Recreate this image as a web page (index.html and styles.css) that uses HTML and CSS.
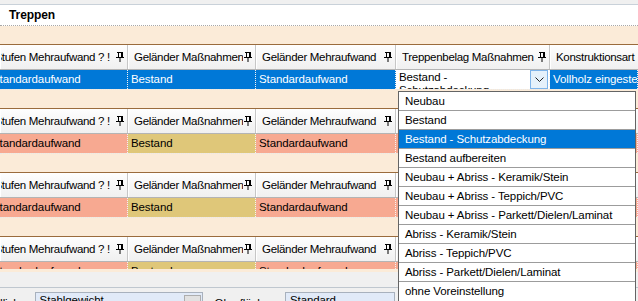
FILE: index.html
```html
<!DOCTYPE html>
<html lang="de">
<head>
    <meta charset="UTF-8">
    <title>Treppen</title>
    <link rel="stylesheet" href="styles.css">
</head>
<body>
    <div class="window">
        <div class="top-strip"></div>
        <div class="title">Treppen</div>

        <div class="band">
            <div class="group">
                <div class="grid-head">
                    <div class="hcell first"><span>Stufen Mehraufwand ? !</span><svg class="pin" viewBox="0 0 8 10"><path d="M1 0.5h6M2.5 0.5v5M5.5 0.5v5M6.5 0.5v5M0 5.5h8M4 5.5v4.5" stroke="#000" fill="none"/></svg></div>
                    <div class="hcell"><span>Geländer Maßnahmen</span><svg class="pin" viewBox="0 0 8 10"><path d="M1 0.5h6M2.5 0.5v5M5.5 0.5v5M6.5 0.5v5M0 5.5h8M4 5.5v4.5" stroke="#000" fill="none"/></svg></div>
                    <div class="hcell"><span>Geländer Mehraufwand</span><svg class="pin" viewBox="0 0 8 10"><path d="M1 0.5h6M2.5 0.5v5M5.5 0.5v5M6.5 0.5v5M0 5.5h8M4 5.5v4.5" stroke="#000" fill="none"/></svg></div>
                    <div class="hcell"><span>Treppenbelag Maßnahmen</span><svg class="pin" viewBox="0 0 8 10"><path d="M1 0.5h6M2.5 0.5v5M5.5 0.5v5M6.5 0.5v5M0 5.5h8M4 5.5v4.5" stroke="#000" fill="none"/></svg></div>
                    <div class="hcell"><span>Konstruktionsart</span></div>
                </div>
                <div class="grid-row selected">
                    <div class="cell first"><span>Standardaufwand</span></div>
                    <div class="cell">Bestand</div>
                    <div class="cell">Standardaufwand</div>
                    <div class="cell editor">
                        <div class="editor-text">Bestand -<br>Schutzabdeckung</div>
                        <div class="drop-btn"><svg viewBox="0 0 9 5"><path d="M0.5 0.5l4 4l4-4" stroke="#222" fill="none"/></svg></div>
                    </div>
                    <div class="cell">Vollholz eingestemmt</div>
                </div>
            </div>

            <div class="group">
                <div class="grid-head">
                    <div class="hcell first"><span>Stufen Mehraufwand ? !</span><svg class="pin" viewBox="0 0 8 10"><path d="M1 0.5h6M2.5 0.5v5M5.5 0.5v5M6.5 0.5v5M0 5.5h8M4 5.5v4.5" stroke="#000" fill="none"/></svg></div>
                    <div class="hcell"><span>Geländer Maßnahmen</span><svg class="pin" viewBox="0 0 8 10"><path d="M1 0.5h6M2.5 0.5v5M5.5 0.5v5M6.5 0.5v5M0 5.5h8M4 5.5v4.5" stroke="#000" fill="none"/></svg></div>
                    <div class="hcell"><span>Geländer Mehraufwand</span><svg class="pin" viewBox="0 0 8 10"><path d="M1 0.5h6M2.5 0.5v5M5.5 0.5v5M6.5 0.5v5M0 5.5h8M4 5.5v4.5" stroke="#000" fill="none"/></svg></div>
                    <div class="hcell"><span>Treppenbelag Maßnahmen</span><svg class="pin" viewBox="0 0 8 10"><path d="M1 0.5h6M2.5 0.5v5M5.5 0.5v5M6.5 0.5v5M0 5.5h8M4 5.5v4.5" stroke="#000" fill="none"/></svg></div>
                    <div class="hcell"><span>Konstruktionsart</span></div>
                </div>
                <div class="grid-row">
                    <div class="cell first salmon"><span>Standardaufwand</span></div>
                    <div class="cell yellow">Bestand</div>
                    <div class="cell salmon">Standardaufwand</div>
                    <div class="cell salmon"></div>
                    <div class="cell salmon"></div>
                </div>
            </div>

            <div class="group">
                <div class="grid-head">
                    <div class="hcell first"><span>Stufen Mehraufwand ? !</span><svg class="pin" viewBox="0 0 8 10"><path d="M1 0.5h6M2.5 0.5v5M5.5 0.5v5M6.5 0.5v5M0 5.5h8M4 5.5v4.5" stroke="#000" fill="none"/></svg></div>
                    <div class="hcell"><span>Geländer Maßnahmen</span><svg class="pin" viewBox="0 0 8 10"><path d="M1 0.5h6M2.5 0.5v5M5.5 0.5v5M6.5 0.5v5M0 5.5h8M4 5.5v4.5" stroke="#000" fill="none"/></svg></div>
                    <div class="hcell"><span>Geländer Mehraufwand</span><svg class="pin" viewBox="0 0 8 10"><path d="M1 0.5h6M2.5 0.5v5M5.5 0.5v5M6.5 0.5v5M0 5.5h8M4 5.5v4.5" stroke="#000" fill="none"/></svg></div>
                    <div class="hcell"><span>Treppenbelag Maßnahmen</span><svg class="pin" viewBox="0 0 8 10"><path d="M1 0.5h6M2.5 0.5v5M5.5 0.5v5M6.5 0.5v5M0 5.5h8M4 5.5v4.5" stroke="#000" fill="none"/></svg></div>
                    <div class="hcell"><span>Konstruktionsart</span></div>
                </div>
                <div class="grid-row">
                    <div class="cell first salmon"><span>Standardaufwand</span></div>
                    <div class="cell yellow">Bestand</div>
                    <div class="cell salmon">Standardaufwand</div>
                    <div class="cell salmon"></div>
                    <div class="cell salmon"></div>
                </div>
            </div>

            <div class="group">
                <div class="grid-head">
                    <div class="hcell first"><span>Stufen Mehraufwand ? !</span><svg class="pin" viewBox="0 0 8 10"><path d="M1 0.5h6M2.5 0.5v5M5.5 0.5v5M6.5 0.5v5M0 5.5h8M4 5.5v4.5" stroke="#000" fill="none"/></svg></div>
                    <div class="hcell"><span>Geländer Maßnahmen</span><svg class="pin" viewBox="0 0 8 10"><path d="M1 0.5h6M2.5 0.5v5M5.5 0.5v5M6.5 0.5v5M0 5.5h8M4 5.5v4.5" stroke="#000" fill="none"/></svg></div>
                    <div class="hcell"><span>Geländer Mehraufwand</span><svg class="pin" viewBox="0 0 8 10"><path d="M1 0.5h6M2.5 0.5v5M5.5 0.5v5M6.5 0.5v5M0 5.5h8M4 5.5v4.5" stroke="#000" fill="none"/></svg></div>
                    <div class="hcell"><span>Treppenbelag Maßnahmen</span><svg class="pin" viewBox="0 0 8 10"><path d="M1 0.5h6M2.5 0.5v5M5.5 0.5v5M6.5 0.5v5M0 5.5h8M4 5.5v4.5" stroke="#000" fill="none"/></svg></div>
                    <div class="hcell"><span>Konstruktionsart</span></div>
                </div>
                <div class="grid-row short">
                    <div class="cell first salmon"><span>Standardaufwand</span></div>
                    <div class="cell yellow">Bestand</div>
                    <div class="cell salmon">Standardaufwand</div>
                    <div class="cell salmon"></div>
                    <div class="cell salmon"></div>
                </div>
            </div>
        </div>

        <div class="footer">
            <div class="footer-line"></div>
            <div class="footer-fields">
                <span class="label first-label">Stufen gründlich:</span>
                <div class="field wide"><span>Stahlgewicht</span><div class="field-btn"></div></div>
                <span class="label">Oberfläche:</span>
                <div class="field"><span>Standard</span></div>
            </div>
        </div>

        <ul class="popup">
            <li>Neubau</li>
            <li>Bestand</li>
            <li class="active">Bestand - Schutzabdeckung</li>
            <li>Bestand aufbereiten</li>
            <li>Neubau + Abriss - Keramik/Stein</li>
            <li>Neubau + Abriss - Teppich/PVC</li>
            <li>Neubau + Abriss - Parkett/Dielen/Laminat</li>
            <li>Abriss - Keramik/Stein</li>
            <li>Abriss - Teppich/PVC</li>
            <li>Abriss - Parkett/Dielen/Laminat</li>
            <li>ohne Voreinstellung</li>
        </ul>
    </div>
</body>
</html>
```

FILE: styles.css
```css
:root {
    --peach: #fbebd8;
    --brown: #9a6b3c;
    --blue: #0078d7;
    --salmon: #f7a991;
    --yellow: #dfc779;
    --text: #000;
}

* {
    box-sizing: border-box;
}

body {
    margin: 0;
    font-family: 'Liberation Sans', Arial, sans-serif;
    font-size: 11.5px;
    letter-spacing: -0.1px;
    color: var(--text);
    background: var(--peach);
}

.window {
    position: relative;
    width: 638px;
    height: 301px;
    overflow: hidden;
}

.top-strip {
    height: 5px;
    background: #f0f0f0;
    border-bottom: 1px solid #c9d1d9;
}

.title {
    height: 21px;
    background: #fff;
    padding-left: 9px;
    font-size: 12px;
    font-weight: bold;
    line-height: 20px;
    border-bottom: 1px dotted #a8a8a8;
}

.band {
    background: var(--peach);
}

.group {
    padding-top: 18px;
}

.grid-head,
.grid-row {
    display: grid;
    grid-template-columns: 128px 128px 140px 154px 1fr;
}

.grid-head {
    height: 26px;
    border-top: 1px solid var(--brown);
    border-bottom: 1px solid #b4b4b4;
    background: linear-gradient(#fefefe, #f0f0f0);
}

.hcell {
    display: flex;
    align-items: center;
    gap: 1px;
    padding: 0 3px 0 5px;
    border-right: 1px solid #c6c6c6;
    border-left: 1px solid #fff;
    white-space: nowrap;
    overflow: hidden;
    letter-spacing: -0.3px;
}

.hcell:last-child {
    padding-right: 0;
    border-right: none;
}

.hcell span {
    flex: 1;
    min-width: 0;
    overflow: hidden;
}

.hcell.first {
    padding-left: 0;
    justify-content: flex-end;
    gap: 6px;
}

.hcell.first span {
    flex: none;
    overflow: visible;
}

.pin {
    width: 8px;
    height: 10px;
    flex: none;
}

.grid-row {
    height: 20px;
    border-bottom: 1px dotted #e8e8e8;
}

.grid-row.short {
    height: 7px;
    border-bottom: none;
}

.cell {
    padding-left: 3px;
    line-height: 18px;
    white-space: nowrap;
    overflow: hidden;
    border-right: 1px dotted #f4f4f4;
}

.cell.first {
    padding-left: 0;
}

.cell.first span {
    display: inline-block;
    margin-left: -8px;
}

.selected .cell {
    background: var(--blue);
    color: #fff;
}

.cell.salmon {
    background: var(--salmon);
}

.cell.yellow {
    background: var(--yellow);
}

.selected .cell.editor {
    display: flex;
    background: #fff;
    color: var(--text);
    padding-right: 1px;
}

.editor-text {
    flex: 1;
    line-height: 13px;
    padding-top: 1px;
    height: 20px;
    overflow: hidden;
}

.drop-btn {
    width: 18px;
    height: 19px;
    border: 1px solid #7eb4ea;
    background: #e5f1fb;
    display: flex;
    align-items: center;
    justify-content: center;
}

.drop-btn svg {
    width: 9px;
    height: 5px;
}

.footer {
    position: absolute;
    left: 0;
    right: 0;
    top: 272px;
    bottom: 0;
    background: #f0f0f0;
}

.footer-line {
    height: 16px;
    border-bottom: 1px solid #bfc7cf;
}

.footer-fields {
    display: flex;
    align-items: flex-start;
    padding-top: 4px;
    gap: 12px;
}

.label {
    line-height: 18px;
    padding-top: 2px;
}

.first-label {
    margin-left: -62px;
}

.field {
    width: 110px;
    height: 20px;
    background: #e1eaf8;
    border: 1px solid #a8b1bd;
    padding: 1px 0 0 4px;
    display: flex;
}

.field span {
    flex: 1;
}

.field.wide {
    width: 168px;
}

.field-btn {
    width: 17px;
    height: 16px;
    margin: 1px 1px 0 0;
    background: #e1e1e1;
    border: 1px solid #adadad;
}

.popup {
    position: absolute;
    left: 398px;
    top: 91px;
    width: 238px;
    margin: 0;
    padding: 0;
    list-style: none;
    background: #fff;
    border: 1px solid #646464;
}

.popup li {
    height: 19px;
    line-height: 18px;
    padding-left: 6px;
    border-bottom: 1px solid #9c9c9c;
    white-space: nowrap;
}

.popup li:last-child {
    border-bottom: none;
}

.popup li.active {
    background: var(--blue);
    color: #fff;
}
```
